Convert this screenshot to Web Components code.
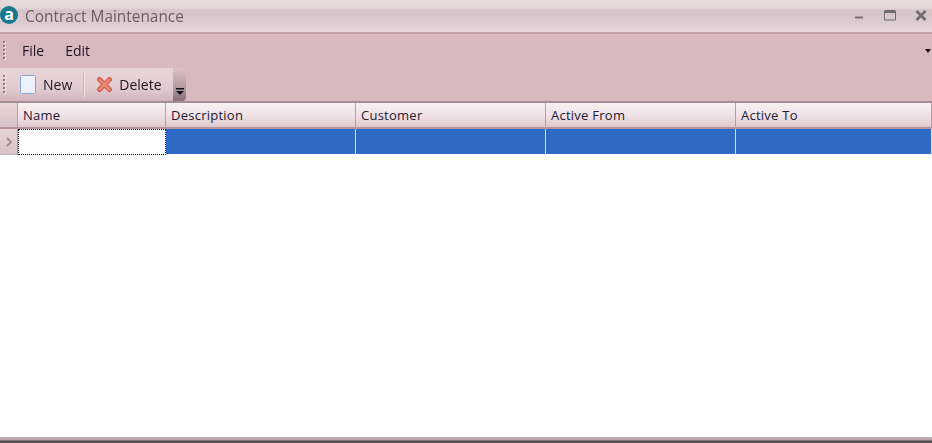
<!DOCTYPE html>
<html>
<head>
<meta charset="utf-8">
<title>Contract Maintenance</title>
<style>
  html, body { margin: 0; height: 100%; overflow: hidden; background: #fff; }
  body { font-family: "Open Sans", "Noto Sans", sans-serif; }
  contract-window { height: 443px; }
</style>
</head>
<body>
<contract-window>
  <title-bar slot="title">Contract Maintenance</title-bar>
  <menu-strip slot="menu">
    <span>File</span>
    <span>Edit</span>
  </menu-strip>
  <tool-strip slot="tools"></tool-strip>
  <data-grid slot="grid" columns="Name:148,Description:190,Customer:190,Active From:190,Active To:196"></data-grid>
</contract-window>

<script>
class ContractWindow extends HTMLElement {
  constructor() {
    super();
    this.attachShadow({ mode: 'open' });
    this.shadowRoot.innerHTML = `
      <style>
        :host { display: flex; flex-direction: column; width: 932px; box-sizing: border-box; }
        .grid { flex: 1; min-height: 0; display: flex; }
        .bottom { height: 6px; background: linear-gradient(#c4b0b6 0, #c4aab1 2px, #a8969b 3px, #5a5054 4px, #5a5054 6px); }
      </style>
      <slot name="title"></slot>
      <slot name="menu"></slot>
      <slot name="tools"></slot>
      <div class="grid"><slot name="grid"></slot></div>
      <div class="bottom"></div>`;
  }
}

class TitleBar extends HTMLElement {
  constructor() {
    super();
    this.attachShadow({ mode: 'open' });
    this.shadowRoot.innerHTML = `
      <style>
        :host {
          display: flex; align-items: center; height: 34px; box-sizing: border-box;
          padding: 0 5px 0 0;
          background: linear-gradient(#e6dadd 0, #e3d7da 8px, #d5c3c8 10px, #dcccd1 24px, #e6d8dd 32px);
          border-bottom: 2px solid #c39fab;
        }
        .logo {
          width: 18px; height: 18px; flex: none; border-radius: 50%;
          background: #17788f; color: #fff; display: flex; align-items: center; justify-content: center;
          font: 700 16px/18px "Open Sans", sans-serif;
          transform: translateY(-1px);
        }
        .logo span { transform: translateY(-1px); }
        .text { margin-left: 7px; font-size: 15.4px; color: #6d5b66; flex: 1; filter: blur(.3px); }
        .btns { display: flex; align-items: center; gap: 20px; margin-top: -1px; }
        svg { display: block; }
        .x { margin-left: -1px; }
      </style>
      <div class="logo"><span>a</span></div>
      <span class="text"><slot></slot></span>
      <div class="btns">
        <svg width="10" height="10" viewBox="0 0 10 10"><path d="M1 6.500h8" stroke="#767076" stroke-width="2"/></svg>
        <svg width="12" height="11" viewBox="0 0 12 11"><path d="M.5 1h11v9H.5z" fill="none" stroke="#6f6a70"/><path d="M1 1.500h10" stroke="#6f6a70" stroke-width="3"/></svg>
        <svg class="x" width="12" height="11" viewBox="0 0 12 11"><path d="M1.500 1l9 9M10.500 1l-9 9" stroke="#6f6a70" stroke-width="2.600"/></svg>
      </div>`;
  }
}

// dotted drag handle at the left of each strip
const gripSvg = `<svg class="grip" width="4" height="19" viewBox="0 0 4 19">
  <g fill="#f3e9ec"><rect x="1" y="1" width="2" height="2"/><rect x="1" y="5" width="2" height="2"/><rect x="1" y="9" width="2" height="2"/><rect x="1" y="13" width="2" height="2"/><rect x="1" y="17" width="2" height="2"/></g>
  <g fill="#8a7780"><rect y="0" width="2" height="2"/><rect y="4" width="2" height="2"/><rect y="8" width="2" height="2"/><rect y="12" width="2" height="2"/><rect y="16" width="2" height="2"/></g></svg>`;

class MenuStrip extends HTMLElement {
  constructor() {
    super();
    this.attachShadow({ mode: 'open' });
    this.shadowRoot.innerHTML = `
      <style>
        :host {
          display: flex; align-items: center; height: 33px; box-sizing: border-box;
          padding: 0 1px 0 3px; background: #d9b9c0;
          font-size: 14px; color: #1d1622;
        }
        .items { display: flex; flex: 1; gap: 21px; margin-left: 15px; filter: blur(.3px); }
        .more { width: 0; height: 0; border: 3.500px solid transparent; border-top: 4px solid #111; border-bottom: 0; }
      </style>
      ${gripSvg}
      <div class="items"><slot></slot></div>
      <div class="more"></div>`;
  }
}

class ToolStrip extends HTMLElement {
  constructor() {
    super();
    this.attachShadow({ mode: 'open' });
    this.shadowRoot.innerHTML = `
      <style>
        :host {
          display: flex; height: 36px; box-sizing: border-box; padding-top: 1px; background: #d9b9c0;
          font-size: 14px; color: #1d1622; border-bottom: 2px solid #a88d97;
        }
        .bar {
          display: flex; align-items: center; width: 173px; height: 33px; box-sizing: border-box; padding-left: 3px;
          background: linear-gradient(#e8d5da, #e2ccd2 60%, #d3b5bc);
        }
        .end {
          width: 13px; height: 33px; display: flex; align-items: flex-end; justify-content: center; padding-bottom: 6px; box-sizing: border-box;
          background: linear-gradient(#dcc2c9, #b79ca5 55%, #86707a); border-radius: 0 4px 4px 0;
        }
        .btn { display: flex; align-items: center; filter: blur(.3px); }
        .new { margin-left: 13px; gap: 7px; }
        .sep { width: 1px; height: 24px; margin: 0 11px 0 12px; background: #f1e6e8; box-shadow: -1px 0 #cfb3bb; }
        .del { gap: 6px; }
        svg { display: block; }
      </style>
      <div class="bar">
        ${gripSvg}
        <div class="btn new">
          <svg width="16" height="19" viewBox="0 0 16 19">
            <rect x=".5" y=".5" width="15" height="18" rx="1" fill="#eef2fa" stroke="#8ba3d4"/>
          </svg>
          <span>New</span>
        </div>
        <div class="sep"></div>
        <div class="btn del">
          <svg width="17" height="17" viewBox="0 0 17 17">
            <path d="M3.500 3.500l10 10M13.500 3.500l-10 10" fill="none" stroke="#d9604f" stroke-width="5" stroke-linecap="round"/>
            <path d="M3.500 3.500l10 10M13.500 3.500l-10 10" fill="none" stroke="#ec8f7a" stroke-width="2" stroke-linecap="round"/>
          </svg>
          <span>Delete</span>
        </div>
      </div>
      <div class="end">
        <svg width="8" height="7" viewBox="0 0 8 7"><path d="M0 0h8v1.500H0zM0 3h8L4 7z" fill="#111"/></svg>
      </div>`;
  }
}

class DataGrid extends HTMLElement {
  constructor() {
    super();
    this.attachShadow({ mode: 'open' });
  }
  connectedCallback() {
    const cols = this.getAttribute('columns').split(',').map((c) => c.split(':'));
    const widths = cols.map((c) => c[1] + 'px').join(' ');
    const heads = cols.map((c) => `<div class="head">${c[0]}</div>`).join('');
    const cells = cols.map((c, i) => `<div class="cell${i == 0 ? ' cur' : ''}"></div>`).join('');
    this.shadowRoot.innerHTML = `
      <style>
        :host { display: block; flex: 1; background: #fff; font-size: 13px; color: #1c2033; }
        .row { display: grid; grid-template-columns: 18px ${widths}; }
        .head {
          height: 26px; box-sizing: border-box; padding: 3px 0 0 5px; letter-spacing: .25px;
          background: linear-gradient(#f8f0f2, #f1e3e7 50%, #dfc8ce);
          border-right: 1px solid #b89ea7; border-bottom: 2px solid #b4929d;
        }
        .corner { background: linear-gradient(#e8d7db, #d9c1c8); padding: 0; }
        .rowhead {
          height: 26px; box-sizing: border-box; display: flex; align-items: center; padding-left: 6px;
          background: linear-gradient(#e6d5d9, #d9c3c9); border-right: 1px solid #a99199; border-bottom: 1px solid #c5adb4;
        }
        .cell { height: 26px; box-sizing: border-box; background: #2f69c6; border-right: 1px solid #d6e0f2; border-bottom: 1px solid #fff; }
        .cell.cur { background: #fff; outline: 1px dotted #111; outline-offset: -1px; border: 0; }
      </style>
      <div class="row"><div class="head corner"></div>${heads}</div>
      <div class="row">
        <div class="rowhead"><svg width="6" height="10" viewBox="0 0 6 10"><path d="M1 1l4 4-4 4" fill="none" stroke="#a08d94" stroke-width="2"/></svg></div>
        ${cells}
      </div>`;
  }
}

customElements.define('contract-window', ContractWindow);
customElements.define('title-bar', TitleBar);
customElements.define('menu-strip', MenuStrip);
customElements.define('tool-strip', ToolStrip);
customElements.define('data-grid', DataGrid);
</script>
</body>
</html>
